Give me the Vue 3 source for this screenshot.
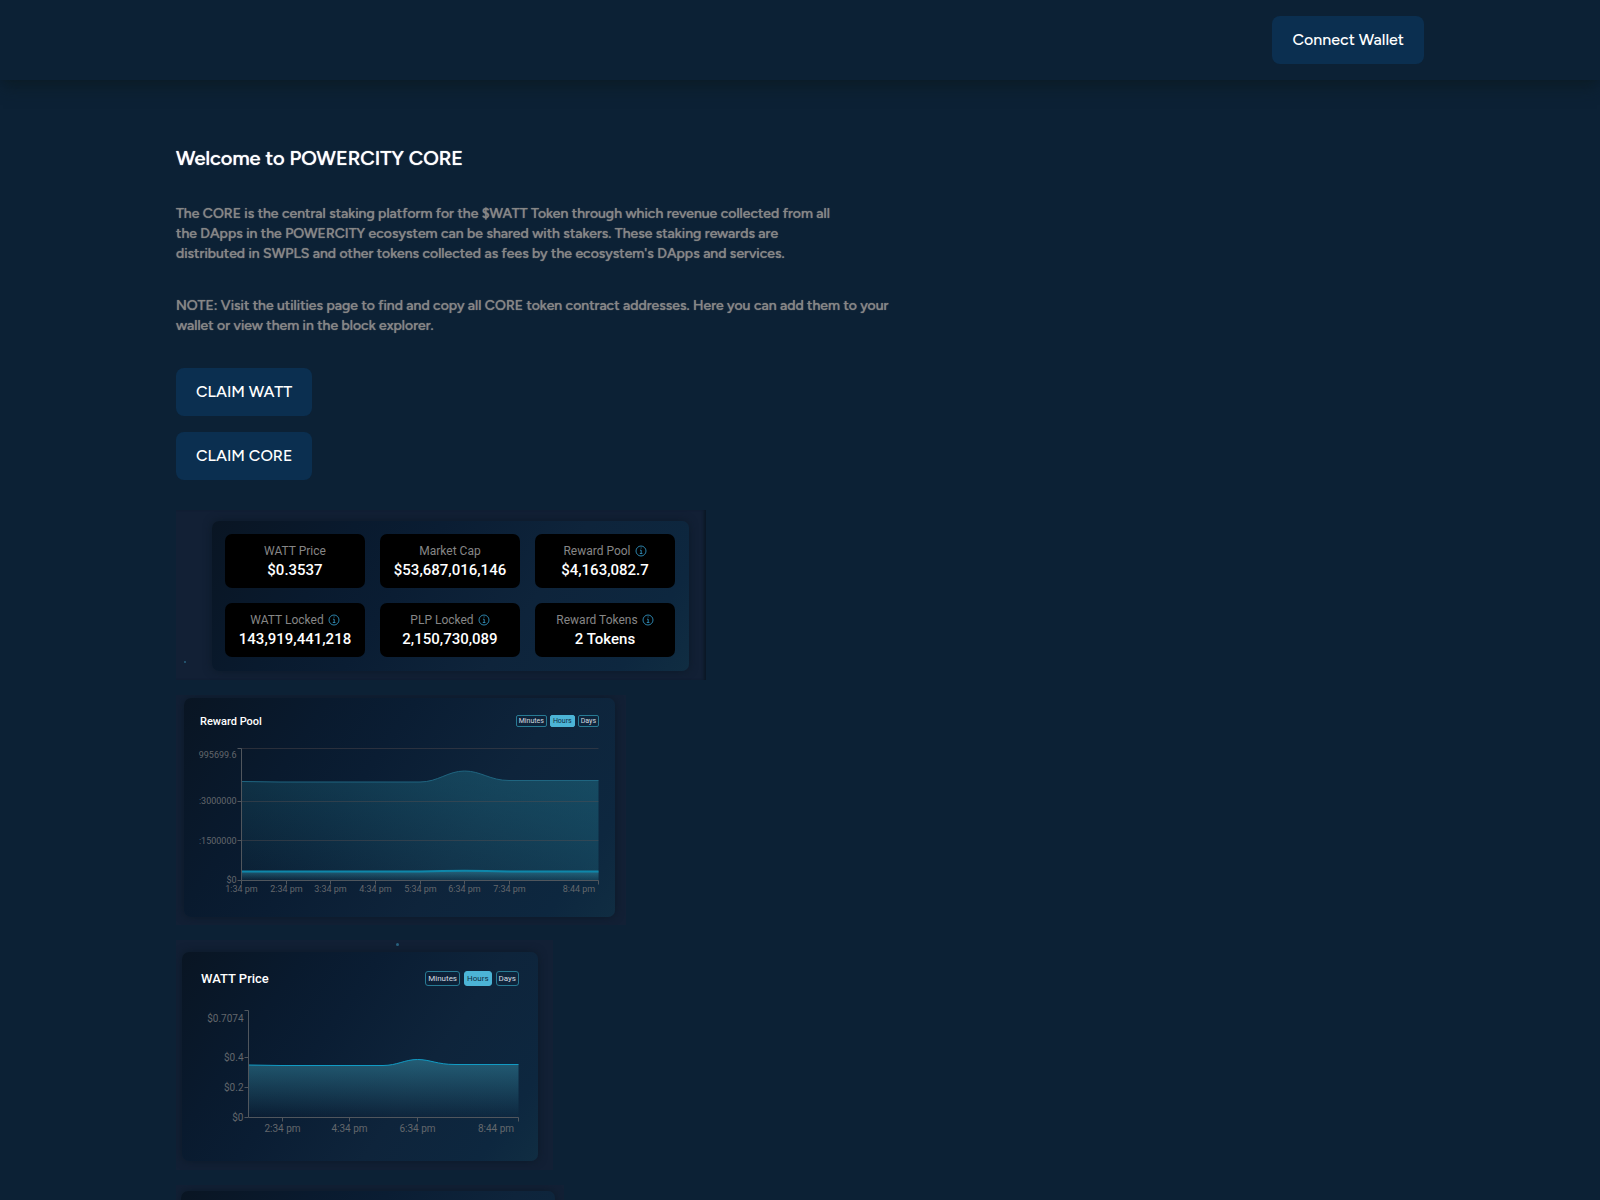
<template>
  <div class="page">
    <header class="navbar">
      <div class="container navbar-inner">
        <button type="button" class="btn">Connect Wallet</button>
      </div>
    </header>

    <main class="container content">
      <h1>Welcome to POWERCITY CORE</h1>
      <p class="intro">
        The CORE is the central staking platform for the $WATT Token through which revenue collected from all<br />
        the DApps in the POWERCITY ecosystem can be shared with stakers. These staking rewards are<br />
        distributed in SWPLS and other tokens collected as fees by the ecosystem's DApps and services.
      </p>
      <p class="note">
        NOTE: Visit the utilities page to find and copy all CORE token contract addresses. Here you can add them to your<br />
        wallet or view them in the block explorer.
      </p>

      <div class="actions">
        <button type="button" class="btn claim">CLAIM WATT</button>
        <button type="button" class="btn claim">CLAIM CORE</button>
      </div>

      <div class="panels">
        <section class="panel panel-stats">
          <div class="card stats">
            <div v-for="stat in stats" :key="stat.label" class="stat">
              <div class="stat-label">
                {{ stat.label }}
                <svg v-if="stat.info" class="info" viewBox="0 0 12 12">
                  <circle cx="6" cy="6" r="5" />
                  <path d="M5 5.2h1.2v3.2M4.8 8.5h2.6M5.6 3h1" />
                </svg>
              </div>
              <div class="stat-value">{{ stat.value }}</div>
            </div>
          </div>
        </section>

        <section v-for="chart in charts" :key="chart.title" class="panel" :class="chart.name">
          <div class="card chart-card">
            <div class="chart-head">
              <h2>{{ chart.title }}</h2>
              <div class="ranges">
                <button
                  v-for="range in ranges"
                  :key="range"
                  type="button"
                  :class="{ active: chart.range === range }"
                  @click="chart.range = range"
                >{{ range }}</button>
              </div>
            </div>
            <svg class="chart" :viewBox="`0 0 ${chart.width} ${chart.height}`" :width="chart.width" :height="chart.height">
              <defs>
                <linearGradient :id="`${chart.name}-wide`" x1="0" y1="1" x2="1" y2="0">
                  <stop offset="0" stop-color="#1f6f86" stop-opacity="0.04" />
                  <stop offset="0.7" stop-color="#1f6f86" stop-opacity="0.4" />
                  <stop offset="1" stop-color="#1f6f86" stop-opacity="0.52" />
                </linearGradient>
                <linearGradient :id="`${chart.name}-fade`" x1="0" y1="0" x2="0" y2="1">
                  <stop offset="0" stop-color="#2f7c95" stop-opacity="0.65" />
                  <stop offset="1" stop-color="#2f7c95" stop-opacity="0" />
                </linearGradient>
              </defs>
              <g v-for="area in chart.areas" :key="area.line">
                <path :d="`${area.line}V${chart.bottom}H${chart.left}Z`" :fill="`url(#${chart.name}-${area.fill})`" />
                <path :d="area.line" fill="none" :stroke="area.stroke" :stroke-width="area.weight" />
              </g>
              <g v-if="chart.grid" class="grid">
                <path v-for="tick in chart.yTicks" :key="tick.y" :d="`M${chart.left} ${tick.y}H${chart.right}`" />
              </g>
              <path class="axis" :d="`M${chart.left} ${chart.yTicks[0].y}V${chart.bottom}H${chart.right}`" />
              <g v-for="tick in chart.yTicks" :key="tick.label">
                <path class="axis" :d="`M${chart.left - 4} ${tick.y}h4`" />
                <text :x="chart.left - 5" :y="tick.text" text-anchor="end">{{ tick.label }}</text>
              </g>
              <g v-for="tick in chart.xTicks" :key="tick.label">
                <path class="axis" :d="`M${tick.x} ${chart.bottom}v4`" />
                <text :x="tick.text || tick.x" :y="chart.xText" text-anchor="middle">{{ tick.label }}</text>
              </g>
            </svg>
          </div>
        </section>

        <section class="panel panel-next">
          <div class="card"></div>
        </section>
      </div>
    </main>
  </div>
</template>

<script setup>
import { reactive } from 'vue';

const ranges = ['Minutes', 'Hours', 'Days'];

const stats = [
  { label: 'WATT Price', value: '$0.3537' },
  { label: 'Market Cap', value: '$53,687,016,146' },
  { label: 'Reward Pool', value: '$4,163,082.7', info: true },
  { label: 'WATT Locked', value: '143,919,441,218', info: true },
  { label: 'PLP Locked', value: '2,150,730,089', info: true },
  { label: 'Reward Tokens', value: '2 Tokens', info: true },
];

const charts = reactive([
  {
    name: 'pool',
    title: 'Reward Pool',
    range: 'Hours',
    width: 399,
    height: 160,
    left: 41.5,
    right: 398.5,
    bottom: 140.5,
    xText: 152,
    grid: true,
    yTicks: [
      { y: 8.5, text: 18, label: '995699.6' },
      { y: 61.5, text: 64, label: ':3000000' },
      { y: 100.5, text: 104, label: ':1500000' },
      { y: 140.5, text: 143, label: '$0' },
    ],
    xTicks: [
      { x: 41.5, label: '1:34 pm' },
      { x: 86.5, label: '2:34 pm' },
      { x: 130.5, label: '3:34 pm' },
      { x: 175.5, label: '4:34 pm' },
      { x: 220.5, label: '5:34 pm' },
      { x: 264.5, label: '6:34 pm' },
      { x: 309.5, label: '7:34 pm' },
      { x: 398.5, text: 379, label: '8:44 pm' },
    ],
    areas: [
      { line: 'M41.5 41.5L80 42H220C238 42 248 31 264.5 31S290 40.5 309 40.5H398.5', stroke: '#1f6580', weight: 1, fill: 'wide' },
      { line: 'M41.5 131.5H220Q264.5 130 309 131.5H398.5', stroke: '#0e87aa', weight: 2, fill: 'fade' },
    ],
  },
  {
    name: 'price',
    title: 'WATT Price',
    range: 'Hours',
    width: 318,
    height: 140,
    left: 47.5,
    right: 317.5,
    bottom: 117.5,
    xText: 132,
    grid: false,
    yTicks: [
      { y: 10.5, text: 22, label: '$0.7074' },
      { y: 57.5, text: 61, label: '$0.4' },
      { y: 87.5, text: 91, label: '$0.2' },
      { y: 117.5, text: 121, label: '$0' },
    ],
    xTicks: [
      { x: 81.5, label: '2:34 pm' },
      { x: 148.5, label: '4:34 pm' },
      { x: 216.5, label: '6:34 pm' },
      { x: 317.5, text: 295, label: '8:44 pm' },
    ],
    areas: [
      { line: 'M47.5 65L80 65.5H182C196 65.5 204 59.5 216.5 59.5S236 64.5 254 64.5H317.5', stroke: '#119bc4', weight: 1, fill: 'fade' },
    ],
  },
]);
</script>

<style>
body {
  margin: 0;
  background: #0c2135;
}
</style>

<style scoped>
.page {
  min-height: 100vh;
  background: #0c2135;
  color: #fff;
  font-family: Figtree, Lato, sans-serif;
}

.container {
  max-width: 1248px;
  margin: 0 auto;
}

.navbar {
  box-shadow: 0 10px 15px -3px rgba(12, 27, 36, 0.7), 0 4px 6px -4px rgba(12, 27, 36, 0.7);
}

.navbar-inner {
  display: flex;
  justify-content: flex-end;
  padding: 16px 0;
}

.btn {
  height: 48px;
  padding: 0 20px 2px;
  border: 0;
  border-radius: 8px;
  background: #0b2f50;
  color: #fff;
  font-family: inherit;
  font-size: 16px;
  font-weight: 500;
  cursor: pointer;
}

.content {
  padding-top: 64px;
}

h1,
.intro,
.note {
  font-weight: 500;
  text-shadow: 0 0 1px currentColor;
}

h1 {
  margin: 0;
  font-size: 20px;
  line-height: 28px;
}

.intro,
.note {
  margin: 32px 0 0;
  color: #868686;
  font-size: 14px;
  line-height: 20px;
}

.actions {
  display: flex;
  flex-direction: column;
  align-items: flex-start;
  gap: 16px;
  margin-top: 32px;
}

.claim {
  min-width: 136px;
}

.panels {
  display: flex;
  flex-direction: column;
  align-items: flex-start;
  gap: 15px;
  margin-top: 30px;
  font-family: Roboto, sans-serif;
}

.panel {
  position: relative;
  background: #122035;
  overflow: hidden;
}

.card {
  box-sizing: border-box;
  border-radius: 7px;
  background: linear-gradient(125deg, #091523 0%, #091a2e 25%, #0a1d33 40%, #0e243b 65%, #0d273f 88%, #102d42 100%);
  box-shadow: 0 0 8px rgba(10, 24, 36, 0.8);
}

.panel-stats {
  padding: 11px 17px 9px 36px;
  box-shadow: inset -3px 0 3px -1px #0a1724;
}

/* faint particles behind the cards */
.panel-stats::before,
.price::before {
  content: '';
  position: absolute;
  width: 2px;
  height: 2px;
  border-radius: 50%;
  background: #28617e;
}

.panel-stats::before {
  left: 8px;
  bottom: 17px;
}

.price::before {
  top: 3px;
  left: 220px;
  width: 3px;
  height: 3px;
}

.stats {
  display: grid;
  grid-template-columns: repeat(3, 140px);
  gap: 15px;
  padding: 13px 14px 14px 13px;
}

.stat {
  height: 54px;
  box-sizing: border-box;
  padding-top: 8px;
  border-radius: 7px;
  background: #000;
  text-align: center;
}

.stat-label {
  display: flex;
  justify-content: center;
  align-items: center;
  gap: 4px;
  color: #868686;
  font-size: 12px;
  line-height: 18px;
}

.info {
  width: 12px;
  height: 12px;
  fill: none;
  stroke: #2c82aa;
  stroke-width: 1;
}

.stat-value {
  font-size: 15px;
  line-height: 20px;
  font-weight: 500;
}

.pool {
  padding: 3px 11px 8px 8px;
}

.price {
  padding: 12px 15px 9px 6px;
}

.chart-head {
  display: flex;
  justify-content: space-between;
  align-items: flex-start;
  height: 16px;
}

h2 {
  margin: 0;
  font-size: 11px;
  line-height: 18px;
  font-weight: 500;
}

.pool .chart-card {
  padding: 15px 16px;
  height: 219px;
}

.pool .chart {
  margin-top: 11px;
}

.pool .ranges {
  padding-top: 2px;
}

.price .chart-card {
  padding: 18px 19px;
  height: 209px;
}

.price h2 {
  font-size: 13px;
}

.price .chart {
  margin-top: 14px;
}

.ranges {
  display: flex;
  gap: 3px;
}

.ranges button {
  height: 12px;
  padding: 0 2px;
  border: 1px solid #287b94;
  border-radius: 2px;
  background: transparent;
  color: #d5dbe0;
  font-family: inherit;
  font-size: 7px;
  line-height: 10px;
  cursor: pointer;
}

.price .ranges {
  gap: 4px;
  padding-top: 1px;
}

.price .ranges button {
  height: 15px;
  border-radius: 3px;
  font-size: 8px;
  line-height: 13px;
}

.ranges button.active {
  border-color: #4cb4d6;
  background: #4cb4d6;
  color: #0c2c42;
}

.chart {
  display: block;
  overflow: visible;
}

.chart text {
  fill: #63676c;
  font-size: 9px;
}

.price .chart text {
  font-size: 10px;
}

.axis {
  fill: none;
  stroke: #50565d;
}

.grid path {
  stroke: #5c5050;
  stroke-opacity: 0.4;
}

.panel-next {
  padding: 6px 9px 0 5px;
}

.panel-next .card {
  width: 374px;
  height: 209px;
}
</style>
